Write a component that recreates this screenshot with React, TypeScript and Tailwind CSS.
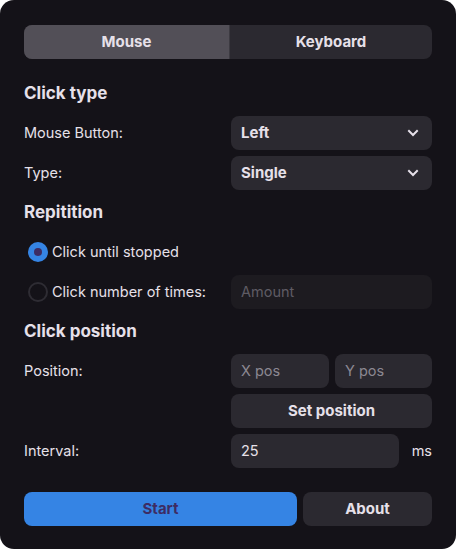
import { useState } from "react";

function Chevron() {
  return (
    <svg width="12" height="8" viewBox="0 0 12 8" fill="none">
      <path d="M2 2l4 4 4-4" stroke="#e6e0e9" strokeWidth="2" strokeLinecap="square" />
    </svg>
  );
}

function Select({ value }: { value: string }) {
  return (
    <div className="flex h-[34px] w-[201px] items-center justify-between rounded-lg bg-[#2b2930] pl-[10px] pr-[13px] text-[15px] font-bold text-[#e6e0e9]">
      <span>{value}</span>
      <Chevron />
    </div>
  );
}

function Radio({ checked, label }: { checked: boolean; label: string }) {
  return (
    <div className="flex items-center gap-[4px] pl-[4px] text-[14.5px] text-[#e6e0e9]">
      {checked ? (
        <span className="flex h-[20px] w-[20px] items-center justify-center rounded-full bg-[#3584e4]">
          <span className="h-[8px] w-[8px] rounded-full bg-[#3d2c63]" />
        </span>
      ) : (
        <span className="h-[20px] w-[20px] rounded-full border-2 border-[#2e2c33]" />
      )}
      <span>{label}</span>
    </div>
  );
}

export default function App() {
  const [tab, setTab] = useState("mouse");

  return (
    <div className="h-[549px] w-[456px] bg-white" style={{ fontFamily: "Inter, 'Noto Sans', sans-serif" }}>
      <div className="h-full w-full rounded-[14px] bg-[#141218] px-6 pt-[25px] text-[#e6e0e9]">
        {/* tabs */}
        <div className="flex h-[34px] overflow-hidden rounded-lg bg-[#2b2930] text-[15px] font-bold">
          <button
            onClick={() => setTab("mouse")}
            className={`w-[205px] ${tab === "mouse" ? "bg-[#524f57]" : ""}`}
          >
            Mouse
          </button>
          <button
            onClick={() => setTab("keyboard")}
            className={`flex-1 border-l border-[#3c3a41] ${tab === "keyboard" ? "bg-[#524f57]" : ""}`}
          >
            Keyboard
          </button>
        </div>

        <h2 className="mt-[22px] text-[17px] leading-6 font-bold">Click type</h2>
        <div className="mt-[11px] flex flex-col gap-[6px] text-[14.5px]">
          <div className="flex items-center justify-between">
            <span>Mouse Button:</span>
            <Select value="Left" />
          </div>
          <div className="flex items-center justify-between">
            <span>Type:</span>
            <Select value="Single" />
          </div>
        </div>

        <h2 className="mt-[10px] text-[17px] leading-6 font-bold">Repitition</h2>
        <div className="mt-[11px] flex flex-col gap-[6px] text-[14.5px]">
          <div className="flex h-[34px] items-center">
            <Radio checked label="Click until stopped" />
          </div>
          <div className="flex items-center justify-between">
            <Radio checked={false} label="Click number of times:" />
            <div className="flex h-[34px] w-[201px] items-center rounded-lg bg-[#1d1b20] px-[10px] text-[#5f5c64]">
              Amount
            </div>
          </div>
        </div>

        <h2 className="mt-[10px] text-[17px] leading-6 font-bold">Click position</h2>
        <div className="mt-[11px] flex flex-col gap-[6px] text-[14.5px]">
          <div className="flex items-center justify-between">
            <span>Position:</span>
            <div className="flex w-[201px] gap-[6px]">
              <div className="flex h-[34px] w-[98px] items-center rounded-lg bg-[#2b2930] px-[10px] text-[#8c8892]">
                X pos
              </div>
              <div className="flex h-[34px] flex-1 items-center rounded-lg bg-[#2b2930] px-[10px] text-[#8c8892]">
                Y pos
              </div>
            </div>
          </div>
          <div className="flex justify-end">
            <button className="h-[34px] w-[201px] rounded-lg bg-[#2b2930] text-[15px] font-bold">Set position</button>
          </div>
          <div className="flex items-center justify-between">
            <span>Interval:</span>
            <div className="flex w-[201px] items-center justify-between">
              <div className="flex h-[34px] w-[168px] items-center rounded-lg bg-[#2b2930] px-[10px]">25</div>
              <span>ms</span>
            </div>
          </div>
        </div>

        <div className="mt-[24px] flex gap-[6px] text-[15px] font-bold">
          <button className="h-[34px] w-[273px] rounded-lg bg-[#3584e4] text-[#3d2c63]">Start</button>
          <button className="h-[34px] flex-1 rounded-lg bg-[#2b2930]">About</button>
        </div>
      </div>
    </div>
  );
}
